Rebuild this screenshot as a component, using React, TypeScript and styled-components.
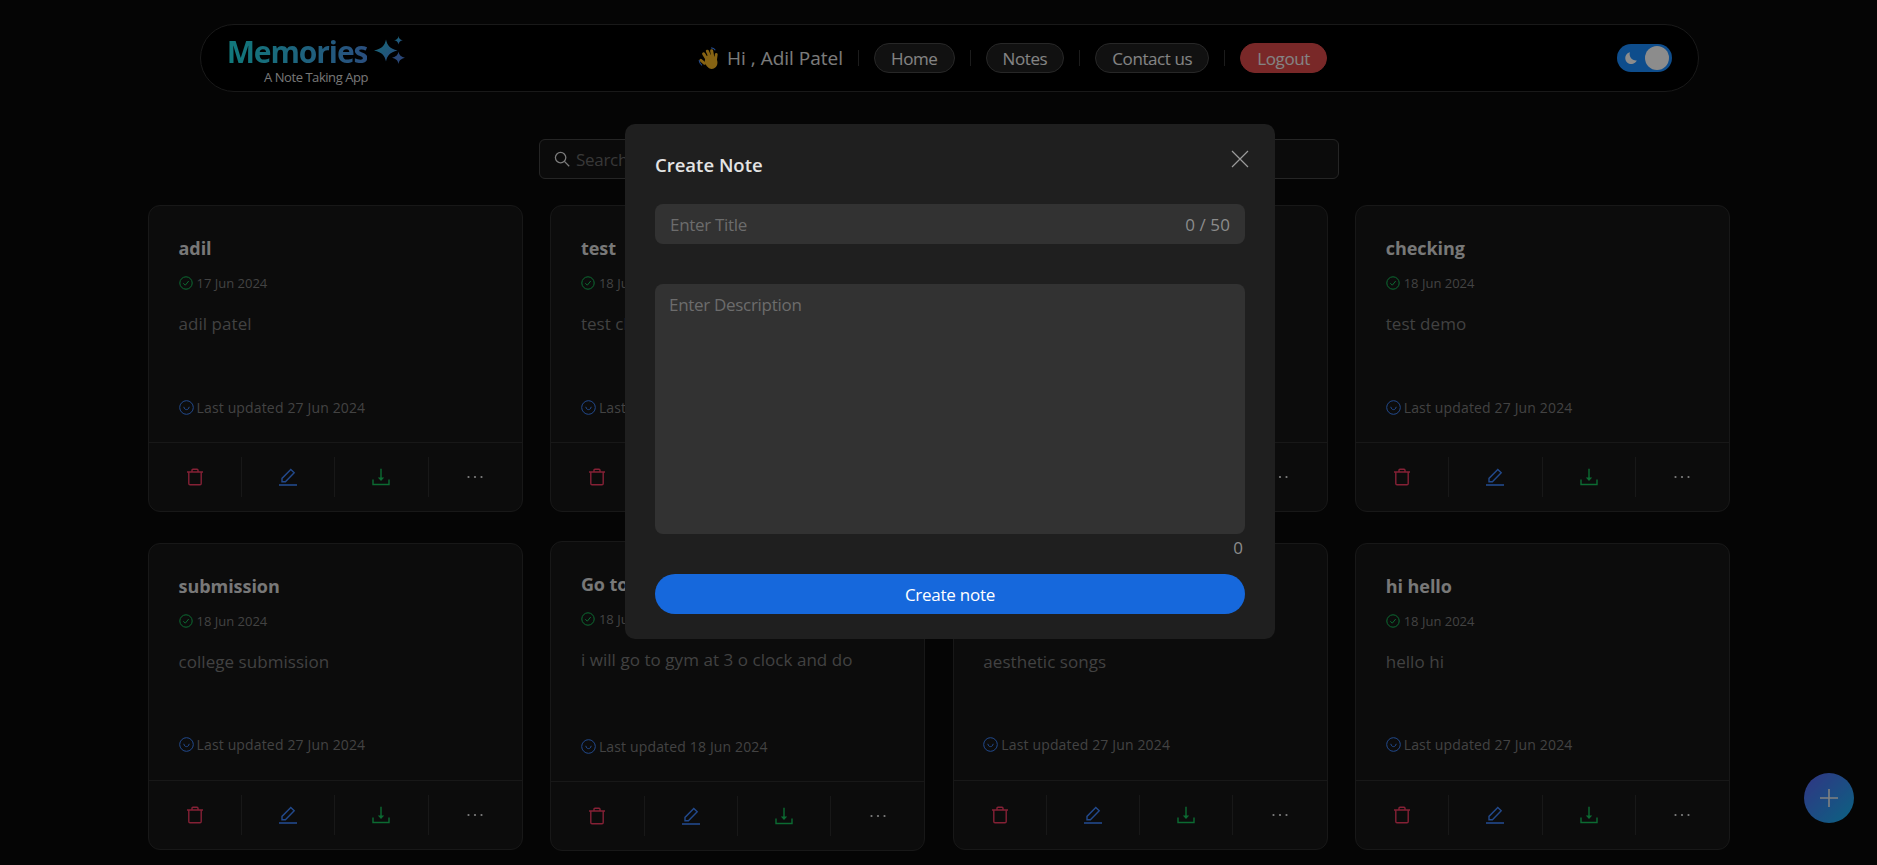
import React from "react";
import styled, { createGlobalStyle } from "styled-components";

const GlobalStyle = createGlobalStyle`
  html, body {
    margin: 0;
    height: 100%;
    overflow: hidden;
    background: #0a0a0a;
    font-family: "Open Sans", "Noto Sans", sans-serif;
  }
  * { box-sizing: border-box; }
`;

const notes = [
  { title: "adil", date: "17 Jun 2024", text: "adil patel", updated: "27 Jun 2024" },
  { title: "test", date: "18 Jun 2024", text: "test check", updated: "27 Jun 2024" },
  { title: "demo", date: "18 Jun 2024", text: "demo", updated: "27 Jun 2024" },
  { title: "checking", date: "18 Jun 2024", text: "test demo", updated: "27 Jun 2024" },
  { title: "submission", date: "18 Jun 2024", text: "college submission", updated: "27 Jun 2024" },
  { title: "Go to gym", date: "18 Jun 2024", text: "i will go to gym at 3 o clock and do", updated: "18 Jun 2024", tall: true },
  { title: "songs", date: "18 Jun 2024", text: "aesthetic songs", updated: "27 Jun 2024" },
  { title: "hi hello", date: "18 Jun 2024", text: "hello hi", updated: "27 Jun 2024" },
];

const TrashIcon = () => (
  <svg width="18" height="18" viewBox="0 0 18 18" fill="none" stroke="#f23c62" strokeWidth="1.4">
    <path d="M1 4h16M6 4V2.2C6 1.6 6.4 1.2 7 1.2h4c.6 0 1 .4 1 1V4M2.8 4v11.6c0 .7.5 1.2 1.2 1.2h10c.7 0 1.2-.5 1.2-1.2V4" />
  </svg>
);

const EditIcon = () => (
  <svg width="18" height="18" viewBox="0 0 18 18" fill="none" stroke="#3f86ff" strokeWidth="1.4">
    <path d="M0 17h18" strokeWidth="1.6" />
    <path d="M3 13.8v-3.4L11.8 1.6l3.4 3.2-8.8 9H3z" />
  </svg>
);

const DownloadIcon = () => (
  <svg width="18" height="18" viewBox="0 0 18 18" fill="none" stroke="#16c45c" strokeWidth="1.4">
    <path d="M1 11.5v5h16v-5" />
    <path d="M9 0.8v11" />
    <path d="M5.8 9.6h6.4L9 13z" fill="#16c45c" stroke="none" />
  </svg>
);

const DotsIcon = () => (
  <svg width="18" height="18" viewBox="0 0 18 18" fill="#e8e8e8">
    <circle cx="2.5" cy="9" r="1.1" />
    <circle cx="9" cy="9" r="1.1" />
    <circle cx="15.5" cy="9" r="1.1" />
  </svg>
);

const CheckIcon = () => (
  <svg width="14" height="14" viewBox="0 0 14 14" fill="none" stroke="#16c45c" strokeWidth="1">
    <circle cx="7" cy="7" r="6.2" />
    <path d="M4.3 7.2l2 2 3.4-4.2" />
  </svg>
);

const SmileIcon = () => (
  <svg width="15" height="15" viewBox="0 0 15 15" fill="none" stroke="#3f86ff" strokeWidth="1">
    <circle cx="7.5" cy="7.5" r="6.8" />
    <path d="M4.8 6.8c.4 2 1.4 2.8 2.7 2.8s2.3-.8 2.7-2.8" />
  </svg>
);

const SearchIcon = () => (
  <svg width="16" height="16" viewBox="0 0 16 16" fill="none" stroke="#e0e0e0" strokeWidth="1.3">
    <circle cx="6.6" cy="6.6" r="5.2" />
    <path d="M10.4 10.4l4.8 4.8" />
  </svg>
);

const CloseIcon = () => (
  <svg width="18" height="18" viewBox="0 0 18 18" fill="none" stroke="#9a9a9a" strokeWidth="1.2">
    <path d="M1 1l16 16M17 1L1 17" />
  </svg>
);

const PlusIcon = () => (
  <svg width="20" height="20" viewBox="0 0 20 20" fill="none" stroke="#ececec" strokeWidth="1.6">
    <path d="M10 1v18M1 10h18" />
  </svg>
);

const Sparkles = () => (
  <svg width="31" height="31" viewBox="0 0 31 31">
    <defs>
      <linearGradient id="spark" x1="0" y1="0" x2="1" y2="1">
        <stop offset="0" stopColor="#27c0d8" />
        <stop offset="1" stopColor="#4c86e6" />
      </linearGradient>
    </defs>
    <path d="M12 3.5c1.3 6 3.6 9 11.5 11-7.9 2-10.2 5-11.5 11-1.3-6-3.6-9-12-11 8.4-2 10.7-5 12-11z" fill="url(#spark)" />
    <path d="M24.5 0c.4 2.5 1.4 3.6 4.3 4.3-2.9.7-3.9 1.8-4.3 4.3-.4-2.500-1.400-3.600-4.300-4.300 2.900-.7 3.900-1.800 4.300-4.300z" fill="url(#spark)" />
    <path d="M24.5 15.5c.7 3.4 1.900 4.900 6.500 6.200-4.600 1.300-5.800 2.800-6.500 6.300-.7-3.500-1.900-5-6.500-6.300 4.600-1.300 5.800-2.800 6.500-6.200z" fill="#4c80d8" />
  </svg>
);

const WaveHand = () => (
  <svg width="23" height="23" viewBox="0 0 21 21">
    <g fill="#f4b424">
      <ellipse cx="12" cy="13.5" rx="5.6" ry="6.6" transform="rotate(-22 12 13.5)" />
      <rect x="5.4" y="4.4" width="2.8" height="9" rx="1.4" transform="rotate(-32 6.8 8.9)" />
      <rect x="8.4" y="2.2" width="2.8" height="9" rx="1.4" transform="rotate(-24 9.8 6.7)" />
      <rect x="11.6" y="2" width="2.8" height="9" rx="1.4" transform="rotate(-10 13 6.5)" />
      <rect x="15" y="5.4" width="2.6" height="8" rx="1.3" transform="rotate(8 16.3 9.4)" />
      <rect x="3" y="10" width="2.6" height="7" rx="1.3" transform="rotate(-50 4.3 13.5)" />
    </g>
    <g fill="none" stroke="#3f86ff" strokeWidth="1">
      <path d="M1 12c.2 2 1 3.5 2.6 4.8" />
      <path d="M12 .8c1.6 0 3 .8 3.8 2.2" />
    </g>
  </svg>
);

const MoonIcon = () => (
  <svg width="14" height="14" viewBox="0 0 14 14" fill="#fff">
    <path d="M6 1.2a6 6 0 1 0 6.8 8.2A6.2 6.2 0 0 1 6 1.2z" />
  </svg>
);

const Page = styled.div`
  height: 865px;
  overflow: hidden;
  padding-top: 24px;
`;

const Navbar = styled.nav`
  display: flex;
  align-items: center;
  justify-content: space-between;
  width: 1499px;
  height: 68px;
  margin-left: 200px;
  padding: 0 26px 0 27px;
  background: #000;
  border: 1px solid #2e2e2e;
  border-radius: 34px;
`;

const Brand = styled.div`
  display: flex;
  flex-direction: column;
  align-items: center;
  width: 178px;
`;

const BrandRow = styled.div`
  display: flex;
  align-items: center;
  gap: 7px;
  height: 35px;
  margin: 3px 2px 0 0;
`;

const BrandName = styled.span`
  font-size: 30px;
  line-height: 35px;
  font-weight: 700;
  letter-spacing: -1.1px;
  background: linear-gradient(90deg, #1fdde0, #4c8fe6);
  -webkit-background-clip: text;
  background-clip: text;
  color: transparent;
`;

const BrandTagline = styled.span`
  margin-left: -2px;
  font-size: 13px;
  line-height: 16px;
  letter-spacing: -0.45px;
  color: #d9d9d9;
`;

const NavLinks = styled.div`
  display: flex;
  align-items: center;
  gap: 15px;
  margin-left: 2px;
`;

const Greeting = styled.span`
  display: flex;
  align-items: center;
  gap: 6px;
  font-size: 19px;
  color: #e0e0e0;
`;

const NavDivider = styled.span`
  width: 1px;
  height: 16px;
  background: #333;
`;

const NavPill = styled.button<{ $danger?: boolean }>`
  height: 30px;
  padding: 0 16px;
  font: inherit;
  font-size: 17px;
  letter-spacing: -0.4px;
  color: #f0f0f0;
  background: ${(p) => (p.$danger ? "#dd4a4a" : "#1f1f1f")};
  border: 1px solid ${(p) => (p.$danger ? "#dd4a4a" : "#484848")};
  border-radius: 15px;
`;

const ThemeToggle = styled.div`
  display: flex;
  align-items: center;
  justify-content: space-between;
  width: 55px;
  height: 28px;
  padding: 0 3px 0 7px;
  background: #1a8cff;
  border-radius: 14px;
`;

const ToggleKnob = styled.span`
  width: 24px;
  height: 24px;
  background: #fff;
  border-radius: 50%;
`;

const SearchBar = styled.div`
  display: flex;
  align-items: center;
  gap: 4px;
  width: 800px;
  height: 40px;
  margin: 47px 0 0 539px;
  padding: 0 14px;
  background: #141414;
  border: 1px solid #444;
  border-radius: 6px;
`;

const SearchInput = styled.input`
  flex: 1;
  font: inherit;
  font-size: 17px;
  letter-spacing: -0.3px;
  background: none;
  border: 0;
  outline: 0;
  &::placeholder {
    color: #666;
  }
`;

const NoteGrid = styled.section`
  display: grid;
  grid-template-columns: repeat(4, 1fr);
  row-gap: 29px;
  column-gap: 27.6px;
  align-items: center;
  width: 1582px;
  margin: 26px 0 0 148px;
`;

const Card = styled.article`
  background: #161616;
  border: 1px solid #2c2c2c;
  border-radius: 12px;
`;

const CardBody = styled.div`
  display: flex;
  flex-direction: column;
  padding: 28px 30px 25px 29.5px;
  border-bottom: 1px solid #2c2c2c;
`;

const CardTitle = styled.h3`
  margin: 0;
  font-size: 18px;
  line-height: 28px;
  font-weight: 700;
  letter-spacing: -0.05px;
  color: rgba(255, 255, 255, 0.85);
`;

const MetaRow = styled.div<{ $gap: number }>`
  display: flex;
  align-items: center;
  gap: ${(p) => p.$gap}px;
  height: 20px;
  font-size: 14px;
  letter-spacing: 0.15px;
  color: #7a7a7a;
`;

const CreatedRow = styled(MetaRow)`
  margin-top: 11px;
  font-size: 13px;
  letter-spacing: 0;
`;

const CardText = styled.p<{ $tall?: boolean }>`
  height: ${(p) => (p.$tall ? 88 : 85)}px;
  margin: 19px 0 0;
  font-size: 17px;
  line-height: 24px;
  letter-spacing: 0.05px;
  color: #787878;
  white-space: nowrap;
`;

const CardActions = styled.div`
  display: grid;
  grid-template-columns: repeat(4, 1fr);
  padding: 14px 0;
`;

const ActionCell = styled.button`
  display: flex;
  align-items: center;
  justify-content: center;
  height: 40px;
  padding: 0;
  background: none;
  border: 0;
  border-right: 1px solid #2c2c2c;
  &:last-child {
    border-right: 0;
  }
`;

const Mask = styled.div`
  position: fixed;
  inset: 0;
  display: flex;
  justify-content: center;
  align-items: flex-start;
  padding: 124px 0 0 23px;
  background: rgba(0, 0, 0, 0.45);
`;

const Modal = styled.div`
  position: relative;
  width: 650px;
  height: 515px;
  padding: 28px 30px 25px;
  background: #1f1f1f;
  border-radius: 10px;
`;

const ModalTitle = styled.h2`
  margin: 0 0 26px;
  font-size: 18.5px;
  line-height: 26px;
  font-weight: 600;
  color: #e4e4e4;
`;

const ModalClose = styled.button`
  position: absolute;
  top: 26px;
  right: 26px;
  display: flex;
  padding: 0;
  background: none;
  border: 0;
`;

const TitleField = styled.div`
  display: flex;
  align-items: center;
  height: 40px;
  padding: 0 15px 0 13px;
  background: #323232;
  border-radius: 8px;
`;

const TitleInput = styled.input`
  flex: 1;
  font: inherit;
  font-size: 17px;
  letter-spacing: -0.3px;
  color: #fff;
  background: none;
  border: 0;
  outline: 0;
  &::placeholder {
    color: #6c6c6c;
  }
`;

const Counter = styled.span`
  font-size: 17px;
  letter-spacing: 0.1px;
  color: #8c8c8c;
`;

const DescInput = styled.textarea`
  display: block;
  width: 100%;
  height: 250px;
  margin-top: 40px;
  padding: 9px 14px;
  font: inherit;
  font-size: 17px;
  line-height: 24px;
  letter-spacing: -0.3px;
  color: #fff;
  background: #323232;
  border: 0;
  border-radius: 8px;
  outline: 0;
  resize: none;
  &::placeholder {
    color: #6c6c6c;
  }
`;

const DescCount = styled(Counter)`
  display: block;
  height: 40px;
  padding-top: 2px;
  line-height: 24px;
  text-align: right;
  padding-right: 2px;
`;

const SubmitButton = styled.button`
  display: block;
  width: 100%;
  height: 40px;
  font: inherit;
  font-size: 17px;
  letter-spacing: -0.25px;
  color: #fff;
  background: #1668dc;
  border: 0;
  border-radius: 20px;
`;

const Fab = styled.button`
  position: fixed;
  right: 23px;
  bottom: 42px;
  display: flex;
  align-items: center;
  justify-content: center;
  width: 50px;
  height: 50px;
  padding: 0;
  background: linear-gradient(135deg, #5a60f0, #14b4ec);
  border: 0;
  border-radius: 50%;
`;

const NoteCard = ({ note }: { note: (typeof notes)[number] }) => (
  <Card>
    <CardBody>
      <CardTitle>{note.title}</CardTitle>
      <CreatedRow $gap={4}>
        <CheckIcon />
        {note.date}
      </CreatedRow>
      <CardText $tall={note.tall}>{note.text}</CardText>
      <MetaRow $gap={3}>
        <SmileIcon />
        Last updated {note.updated}
      </MetaRow>
    </CardBody>
    <CardActions>
      <ActionCell>
        <TrashIcon />
      </ActionCell>
      <ActionCell>
        <EditIcon />
      </ActionCell>
      <ActionCell>
        <DownloadIcon />
      </ActionCell>
      <ActionCell>
        <DotsIcon />
      </ActionCell>
    </CardActions>
  </Card>
);

export default function App() {
  return (
    <>
      <GlobalStyle />
      <Page>
        <Navbar>
          <Brand>
            <BrandRow>
              <BrandName>Memories</BrandName>
              <Sparkles />
            </BrandRow>
            <BrandTagline>A Note Taking App</BrandTagline>
          </Brand>
          <NavLinks>
            <Greeting>
              <WaveHand />
              Hi , Adil Patel
            </Greeting>
            <NavDivider />
            <NavPill>Home</NavPill>
            <NavDivider />
            <NavPill>Notes</NavPill>
            <NavDivider />
            <NavPill>Contact us</NavPill>
            <NavDivider />
            <NavPill $danger>Logout</NavPill>
          </NavLinks>
          <ThemeToggle>
            <MoonIcon />
            <ToggleKnob />
          </ThemeToggle>
        </Navbar>
        <SearchBar>
          <SearchIcon />
          <SearchInput placeholder="Search Notes" />
        </SearchBar>
        <NoteGrid>
          {notes.map((note) => (
            <NoteCard key={note.title} note={note} />
          ))}
        </NoteGrid>
      </Page>
      <Fab>
        <PlusIcon />
      </Fab>
      <Mask>
        <Modal>
          <ModalTitle>Create Note</ModalTitle>
          <ModalClose>
            <CloseIcon />
          </ModalClose>
          <TitleField>
            <TitleInput placeholder="Enter Title" />
            <Counter>0 / 50</Counter>
          </TitleField>
          <DescInput placeholder="Enter Description" />
          <DescCount>0</DescCount>
          <SubmitButton>Create note</SubmitButton>
        </Modal>
      </Mask>
    </>
  );
}
